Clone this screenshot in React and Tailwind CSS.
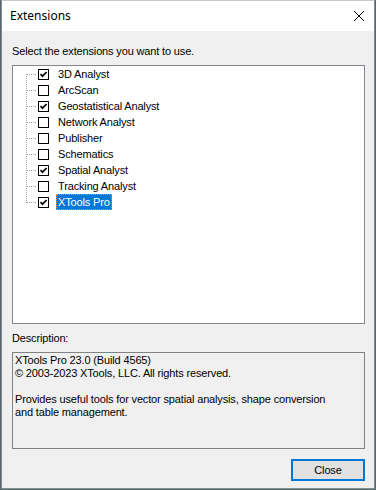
const ITEMS = [
  { name: '3D Analyst', on: true },
  { name: 'ArcScan', on: false },
  { name: 'Geostatistical Analyst', on: true },
  { name: 'Network Analyst', on: false },
  { name: 'Publisher', on: false },
  { name: 'Schematics', on: false },
  { name: 'Spatial Analyst', on: true },
  { name: 'Tracking Analyst', on: false },
  { name: 'XTools Pro', on: true, selected: true },
];

function Connector({ first, last }) {
  return (
    <svg width="11" height="16" className="shrink-0" shapeRendering="crispEdges">
      <line
        x1="0.5"
        y1={first ? 8 : 0}
        x2="0.5"
        y2={last ? 9 : 16}
        stroke="#a0a0a0"
        strokeDasharray="1 1"
      />
      <line x1="1" y1="8.5" x2="11" y2="8.5" stroke="#a0a0a0" strokeDasharray="1 1" />
    </svg>
  );
}

function Check({ on }) {
  return (
    <div className="w-[11px] h-[11px] border border-black bg-white shrink-0 mt-[3px] ml-[1px] flex items-center justify-center">
      {on && (
        <svg width="9" height="9" viewBox="0 0 9 9">
          <polyline points="1.5,4 3.5,6.2 7.6,2" fill="none" stroke="#000" strokeWidth="1.7" />
        </svg>
      )}
    </div>
  );
}

export default function App() {
  return (
    <div
      className="w-[376px] h-[490px] bg-[#4d6b70] pl-[1px] overflow-hidden"
      style={{ fontFamily: '"Liberation Sans", Arial, sans-serif' }}
    >
      <div className="w-[374px] h-[489px] border border-[#8a8a8a] border-t-[#c8c8c8] bg-[#f0f0f0] flex flex-col">
        {/* title bar */}
        <div className="h-[30px] bg-white flex items-center justify-between pl-[8px] pr-[8px] shrink-0">
          <span
            className="text-[12px] text-black leading-none"
            style={{ fontFamily: '"Noto Sans", "Open Sans", sans-serif' }}
          >
            Extensions
          </span>
          <svg width="12" height="12" viewBox="0 0 12 12" className="mr-[1px]">
            <path d="M1 1 L11 11 M11 1 L1 11" stroke="#000" strokeWidth="1" />
          </svg>
        </div>

        <div className="flex flex-col pl-[10px] pt-[14px] text-[11px] leading-[13px] text-black tracking-[-0.15px]">
          <p>Select the extensions you want to use.</p>

          <div className="mt-[7px] w-[353px] h-[259px] border border-[#828790] bg-white pl-[13px]">
            {ITEMS.map((it, i) => (
              <div key={it.name} className="flex h-[16px] items-start">
                <Connector first={i === 0} last={i === ITEMS.length - 1} />
                <Check on={it.on} />
                <span
                  className={
                    it.selected
                      ? 'ml-[7px] h-[16px] px-[2px] leading-[16px] bg-[#0078d7] text-white outline outline-1 outline-dotted outline-[#f0902a] -outline-offset-1'
                      : 'ml-[7px] h-[16px] px-[2px] leading-[16px]'
                  }
                >
                  {it.name}
                </span>
              </div>
            ))}
          </div>

          <p className="mt-[8px]">Description:</p>

          <div className="mt-[7px] w-[353px] h-[97px] border border-[#828282] pl-[2px] pt-[1px]">
            <p>XTools Pro 23.0 (Build 4565)</p>
            <p>© 2003-2023 XTools, LLC. All rights reserved.</p>
            <p>&nbsp;</p>
            <p>Provides useful tools for vector spatial analysis, shape conversion</p>
            <p>and table management.</p>
          </div>

          <div className="mt-[10px] w-[353px] flex justify-end">
            <button className="w-[74px] h-[22px] border-2 border-[#0078d7] bg-[#e1e1e1] text-[11px] text-black leading-none">
              Close
            </button>
          </div>
        </div>
      </div>
    </div>
  );
}
